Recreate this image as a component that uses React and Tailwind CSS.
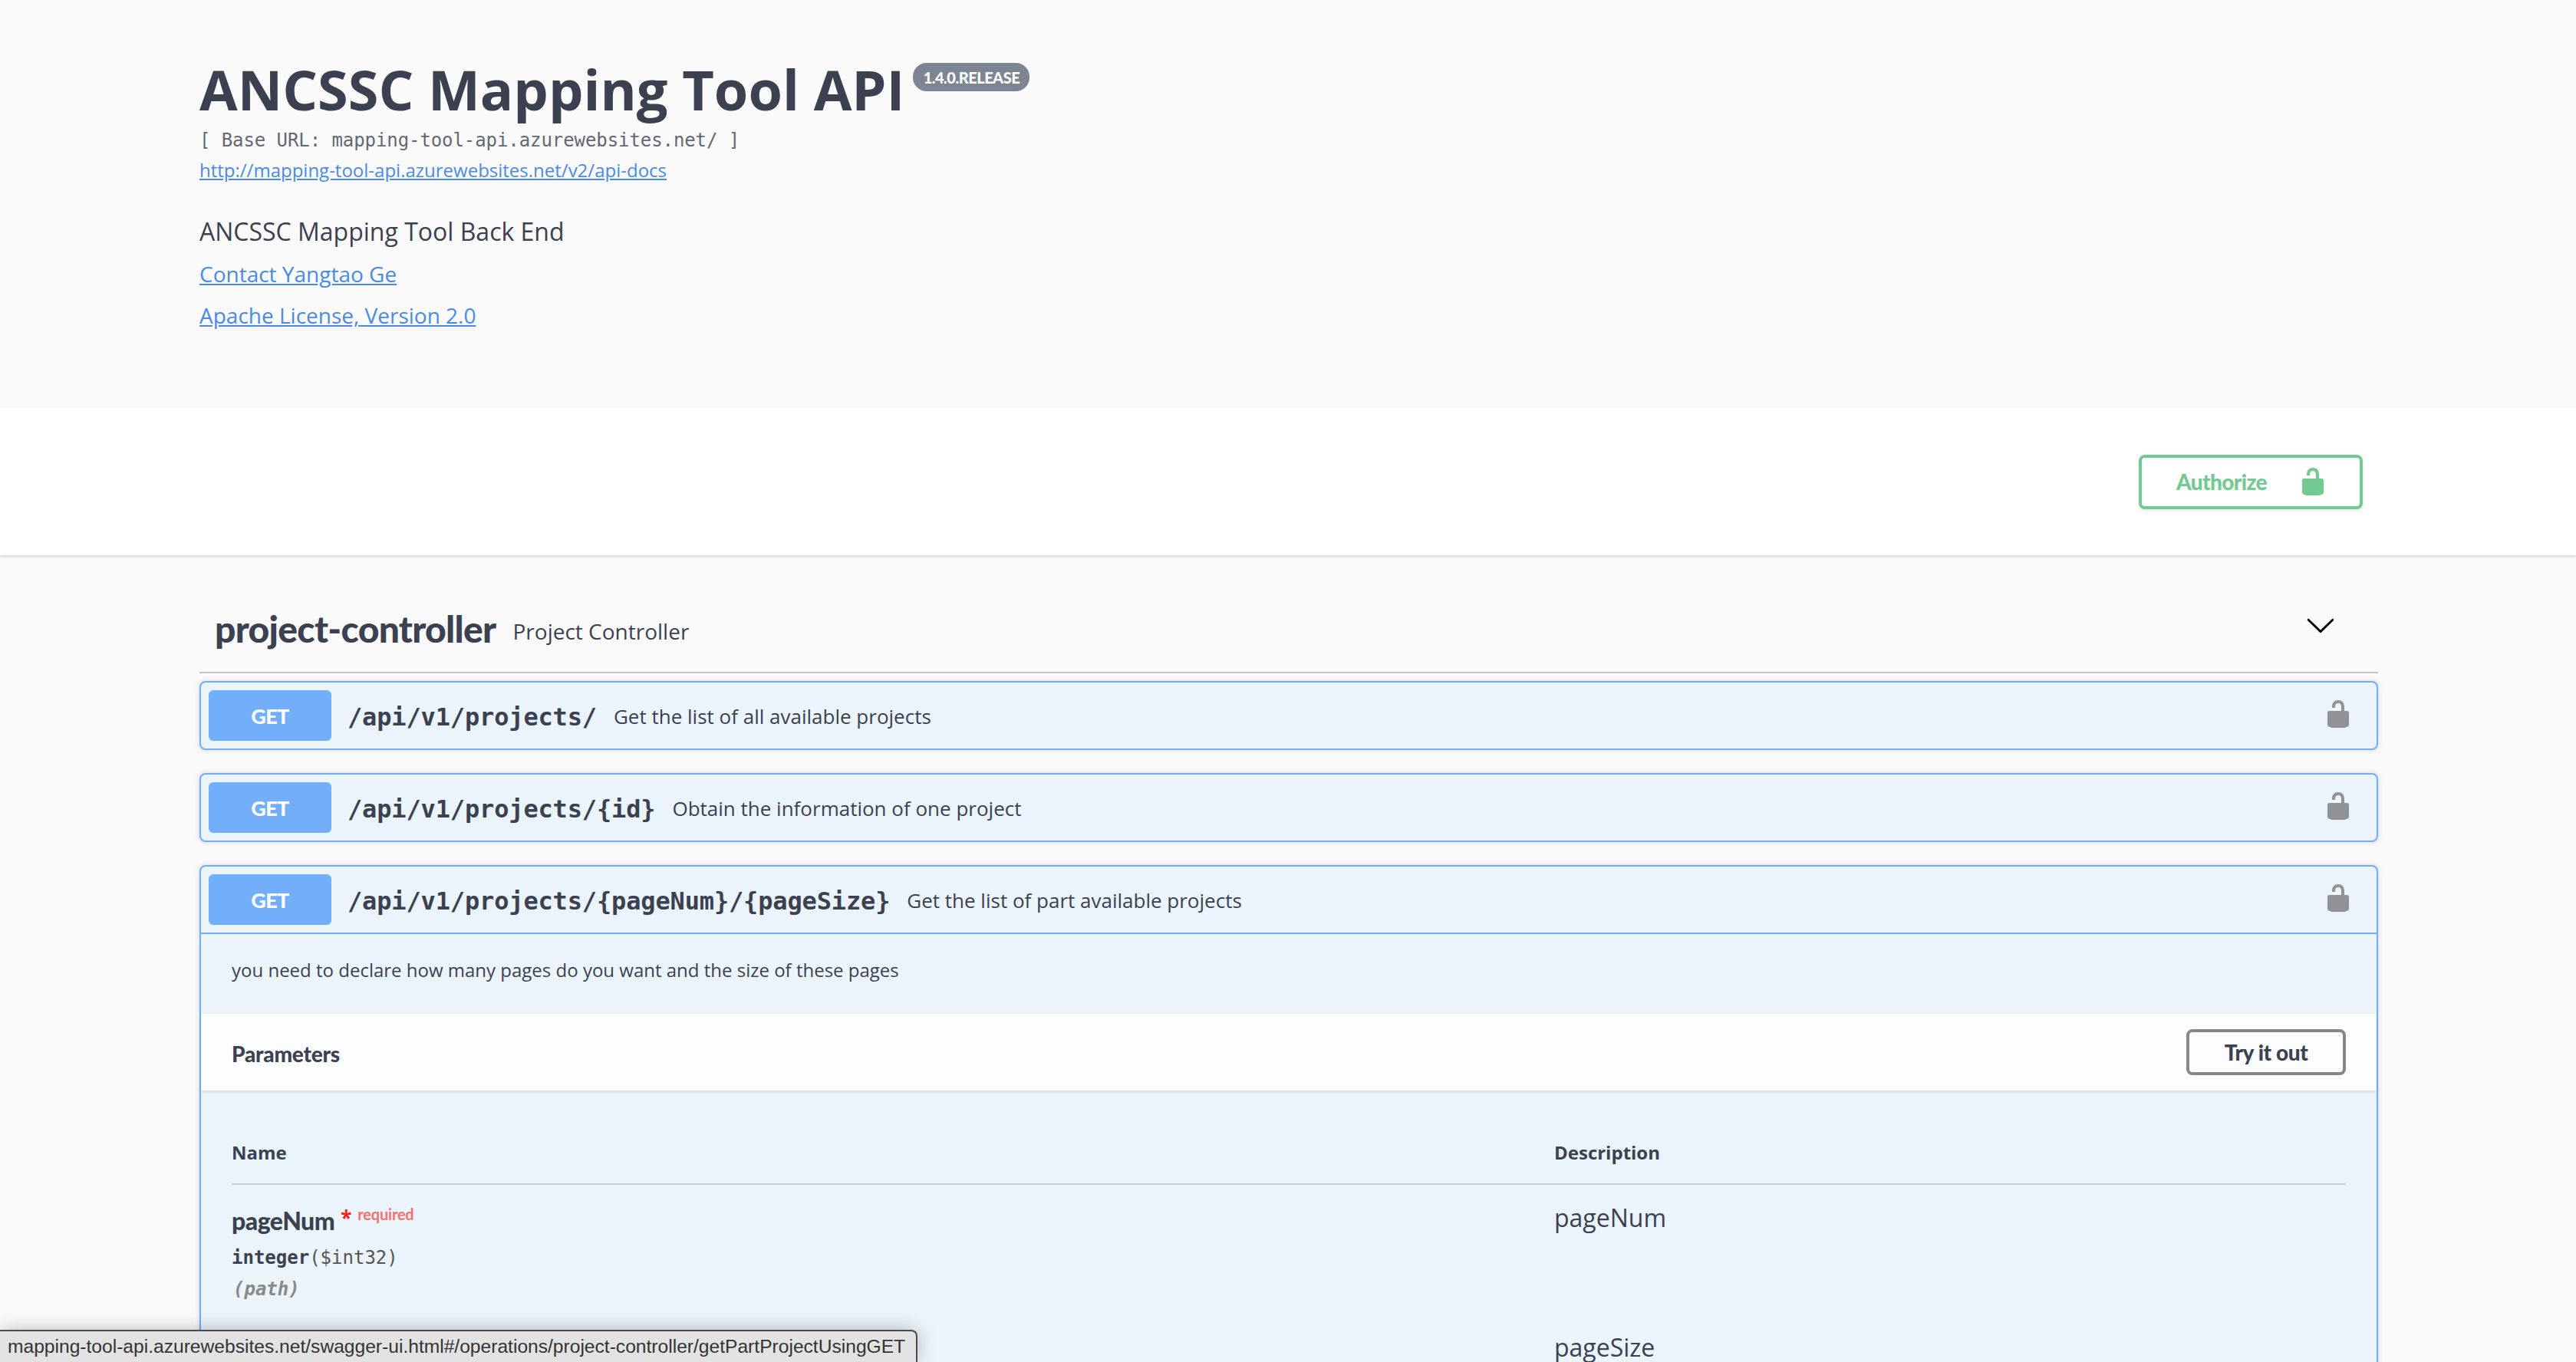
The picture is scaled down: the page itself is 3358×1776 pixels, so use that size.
const OPEN = "font-['Open_Sans',sans-serif]";

const LockIcon = ({ className }) => (
  <svg viewBox="0 0 20 20" className={className} fill="currentColor">
    <path d="M15.8 8H14V5.6C14 2.703 12.665 1 10 1 7.334 1 6 2.703 6 5.6V6h2v-.801C8 3.754 8.797 3 10 3c1.203 0 2 .754 2 2.199V8H4c-.553 0-1 .646-1 1.199V17c0 .549.428 1.139.951 1.307l1.197.387C5.672 18.861 6.55 19 7.1 19h5.8c.549 0 1.428-.139 1.951-.307l1.196-.387c.524-.167.953-.757.953-1.306V9.199C17 8.646 16.352 8 15.8 8z" />
  </svg>
);

const OpHeader = ({ path, summary, expanded }) => (
  <div className={`flex h-[86px] items-center px-[10px] ${expanded ? 'box-content border-b-2 border-[#72adfa]' : ''}`}>
    <div className="flex h-[66px] w-[160px] items-center justify-center rounded-[6px] bg-[#72aefa] pt-[2px] font-['Lato',sans-serif] text-[27px] font-black tracking-[-0.6px] text-white">
      GET
    </div>
    <span className="ml-[21px] mt-[3px] font-['DejaVu_Sans_Mono',monospace] text-[32px] font-bold tracking-[-0.15px] text-[#3b4151]">{path}</span>
    <span className="ml-[22px] mt-[2px] font-['Open_Sans',sans-serif] text-[26px] text-[#3b4151]">{summary}</span>
    <LockIcon className="mb-[5px] ml-auto mr-[20px] h-[40px] w-[40px] text-[#909296]" />
  </div>
);

export default function App() {
  return (
    <div className={`relative h-[1776px] overflow-hidden bg-[#fafafa] ${OPEN} text-[#3b4151]`}>
      {/* Info */}
      <div className="h-[532px] px-[260px] pt-[67px]">
        <div className="flex items-start">
          <h1 className="text-[72px] font-bold leading-[98px]">ANCSSC Mapping Tool API</h1>
          <span className="ml-[11px] mt-[15px] flex h-[37px] w-[152px] items-center justify-center rounded-[18px] bg-[#7d8492] font-['Lato',sans-serif] text-[20px] font-black tracking-[-0.5px] text-white">
            1.4.0.RELEASE
          </span>
        </div>
        <div className="font-['DejaVu_Sans_Mono',monospace] text-[24px] tracking-[-0.08px] leading-[36px] text-[#646874]">
          [ Base URL: mapping-tool-api.azurewebsites.net/ ]
        </div>
        <div className="mt-[3px] text-[24px] leading-[36px]">
          <a className="text-[#4a8ae6] underline">http://mapping-tool-api.azurewebsites.net/v2/api-docs</a>
        </div>
        <p className="mt-[38px] text-[32px] leading-[48px]">ANCSSC Mapping Tool Back End</p>
        <div className="mt-[9px] text-[28px] leading-[44px]">
          <a className="text-[#4a8ae6] underline">Contact Yangtao Ge</a>
        </div>
        <div className="mt-[10px] text-[28px] leading-[44px]">
          <a className="text-[#4a8ae6] underline">Apache License, Version 2.0</a>
        </div>
      </div>

      {/* Authorize bar */}
      <div className="flex h-[192px] items-center justify-end bg-white pr-[278px] shadow-[0_2px_4px_0_rgba(0,0,0,0.15)]">
        <button className="flex h-[71px] w-[292px] items-center justify-center rounded-[8px] border-4 border-[#73c992] bg-white pl-[4px] font-['Lato',sans-serif] text-[28px] font-black tracking-[-0.6px] text-[#73c992] shadow-[0_2px_4px_0_rgba(0,0,0,0.1)]">
          Authorize
          <LockIcon className="ml-[40px] h-[40px] w-[40px]" />
        </button>
      </div>

      {/* Section */}
      <div className="ml-[260px] mr-[258px]">
        <div className="flex h-[154px] items-end border-b-2 border-[#c4c5ca] pb-[24px] pl-[20px]">
          <h2 className="font-['Lato',sans-serif] text-[48px] font-black leading-[64px] tracking-[-0.7px]">project-controller</h2>
          <span className="mb-[9px] ml-[22px] text-[28px] leading-[40px]">Project Controller</span>
          <svg viewBox="0 0 20 20" className="mb-[17px] ml-auto mr-[55px] h-[40px] w-[40px]" fill="#000">
            <path d="M17.418 6.109c.272-.268.709-.268.979 0s.271.701 0 .969l-7.908 7.83c-.27.268-.707.268-.979 0l-7.908-7.83c-.27-.268-.27-.701 0-.969.271-.268.709-.268.979 0L10 13.25l7.418-7.141z" />
          </svg>
        </div>

        <div className="mt-[10px] rounded-[8px] border-2 border-[#72adfa] bg-[#ebf3fb] shadow-[0_0_6px_rgba(0,0,0,0.15)]">
          <OpHeader path="/api/v1/projects/" summary="Get the list of all available projects" />
        </div>
        <div className="mt-[30px] rounded-[8px] border-2 border-[#72adfa] bg-[#ebf3fb] shadow-[0_0_6px_rgba(0,0,0,0.15)]">
          <OpHeader path="/api/v1/projects/{id}" summary="Obtain the information of one project" />
        </div>

        <div className="mt-[30px] h-[800px] rounded-[8px] border-2 border-[#72adfa] bg-[#ebf3fb] shadow-[0_0_6px_rgba(0,0,0,0.15)]">
          <OpHeader expanded path="/api/v1/projects/{pageNum}/{pageSize}" summary="Get the list of part available projects" />
          <div className="flex h-[104px] items-start px-[40px] pt-[29px] text-[24px] leading-[36px]">
            you need to declare how many pages do you want and the size of these pages
          </div>

          {/* Parameters */}
          <div className="flex h-[100px] items-center justify-between bg-[#fcfdfe] pl-[40px] pr-[40px] shadow-[0_2px_4px_0_rgba(0,0,0,0.1)]">
            <h4 className="mt-[3px] font-['Lato',sans-serif] text-[28px] font-black tracking-[-0.2px]">Parameters</h4>
            <button className="h-[60px] w-[208px] rounded-[8px] border-4 border-[#878787] font-['Lato',sans-serif] text-[28px] font-black tracking-[-0.4px] text-[#3b4151]">
              Try it out
            </button>
          </div>

          <div className="px-[40px]">
            <div className="flex h-[123px] items-end border-b-2 border-[#c8cbd2] pb-[22px] text-[24px] font-bold leading-[36px]">
              <div className="w-[1724px]">Name</div>
              <div>Description</div>
            </div>
            <div className="flex h-[178px] pt-[20px]">
              <div className="w-[1724px]">
                <div className="flex items-start">
                  <span className="font-['Lato',sans-serif] text-[32px] font-black leading-[54px] tracking-[-0.5px]">pageNum</span>
                  <span className="ml-[8px] mt-[5px] text-[26px] font-bold leading-[36px] text-[#f4221a]">*</span>
                  <span className="ml-[8px] mt-[3px] font-['Lato',sans-serif] text-[20px] font-bold leading-[30px] tracking-[-0.2px] text-[#f07272]">required</span>
                </div>
                <div className="mt-[3px] font-['DejaVu_Sans_Mono',monospace] text-[24px] font-bold leading-[36px]">
                  integer<span className="font-normal text-[#555555]">($int32)</span>
                </div>
                <div className="mt-[5px] pl-[2px] font-['DejaVu_Sans_Mono',monospace] text-[24px] font-bold italic leading-[36px] text-[#888888]">
                  (path)
                </div>
              </div>
              <div className="mt-[1px] text-[32px] leading-[44px]">pageNum</div>
            </div>
            <div className="flex pt-[12px]">
              <div className="ml-[1724px] text-[32px] leading-[44px]">pageSize</div>
            </div>
          </div>
        </div>
      </div>

      {/* Browser status bubble */}
      <div className="absolute bottom-0 left-0 flex h-[42px] w-[1196px] items-center rounded-tr-[8px] border-r-2 border-t-2 border-[#4a4a4a] bg-[#e2e2e2] pl-[10px] font-['Liberation_Sans',sans-serif] text-[24.6px] text-[#333333] shadow-[0_0_24px_rgba(0,0,0,0.25)]">
        mapping-tool-api.azurewebsites.net/swagger-ui.html#/operations/project-controller/getPartProjectUsingGET
      </div>
    </div>
  );
}
